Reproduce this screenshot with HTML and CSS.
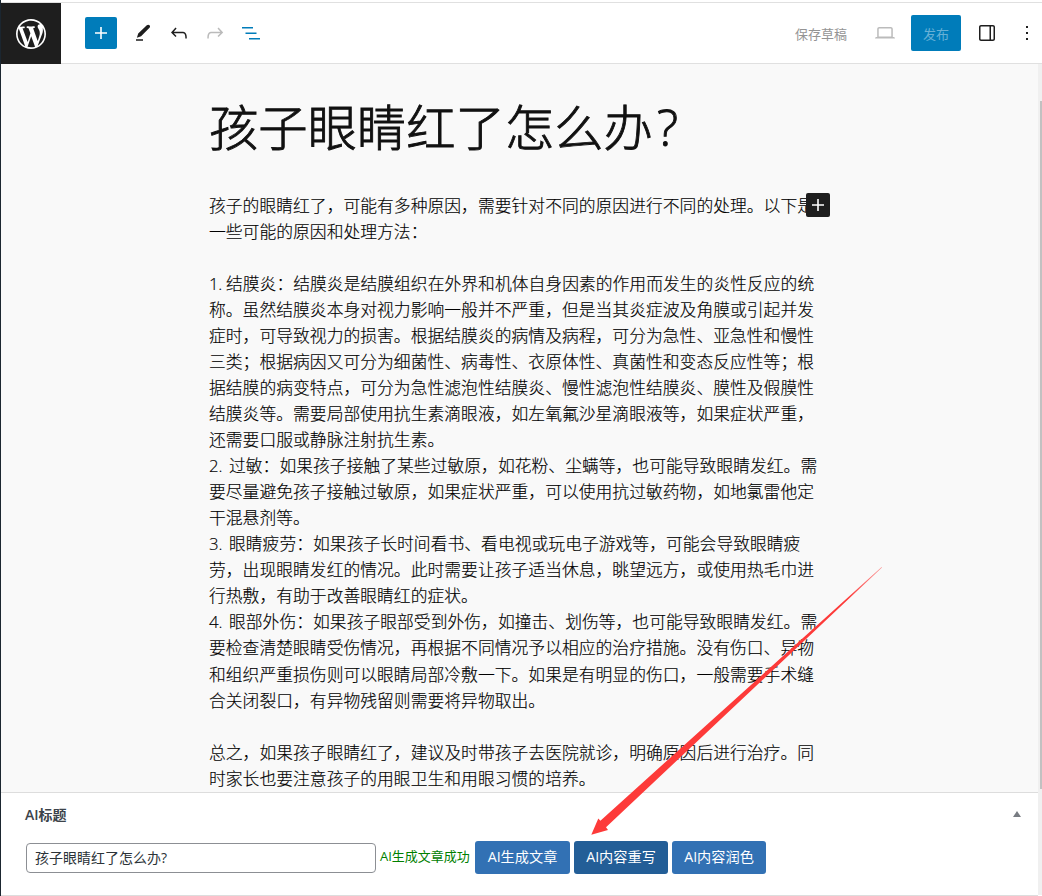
FILE: index.html
```html
<!DOCTYPE html>
<html lang="zh-CN">
<head>
<meta charset="utf-8">
<title>孩子眼睛红了怎么办?</title>
<link rel="stylesheet" href="styles.css">
</head>
<body>
<div class="editor">
  <header class="header">
    <a class="logo"><svg width="30" height="30" viewBox="0 0 20 20"><path d="M20 10c0-5.51-4.49-10-10-10C4.48 0 0 4.49 0 10c0 5.52 4.48 10 10 10 5.51 0 10-4.48 10-10zM7.78 15.37L4.37 6.22c.55-.02 1.17-.08 1.17-.08.5-.06.44-1.13-.06-1.11 0 0-1.45.11-2.37.11-.18 0-.37 0-.58-.01C4.12 2.69 6.87 1.11 10 1.11c2.33 0 4.45.87 6.05 2.34-.68-.11-1.65.39-1.65 1.58 0 .74.45 1.36.9 2.1.35.61.55 1.36.55 2.46 0 1.49-1.4 5-1.4 5l-3.03-8.37c.54-.02.82-.17.82-.17.5-.05.44-1.25-.06-1.22 0 0-1.44.12-2.38.12-.87 0-2.33-.12-2.33-.12-.5-.03-.56 1.2-.06 1.22l.92.08 1.26 3.41zM17.41 10c.24-.64.74-1.87.43-4.25.7 1.29 1.05 2.71 1.05 4.25 0 3.29-1.73 6.24-4.4 7.78.97-2.59 1.94-5.2 2.92-7.78zM6.1 18.09C3.12 16.65 1.11 13.53 1.11 10c0-1.3.23-2.48.72-3.59C3.25 10.3 4.67 14.2 6.1 18.09zm4.03-6.63l2.58 6.98c-.86.29-1.76.45-2.71.45-.79 0-1.57-.11-2.29-.33.81-2.38 1.62-4.74 2.42-7.1z"/></svg></a>
    <div class="tools">
      <button class="add"><svg width="24" height="24" viewBox="0 0 24 24"><path d="M18 11.2h-5.2V6h-1.6v5.2H6v1.6h5.2V18h1.6v-5.2H18z"/></svg></button>
      <svg class="icon" width="24" height="24" viewBox="0 0 24 24"><path d="M15.800 4.300c1-.9 2.100-.7 2.700 0 .7.800.7 1.700 0 2.500L10.100 15.300 5.900 16.800 7.200 12.500zM5 18.300h7v1.500H5z"/></svg>
      <svg class="icon" width="24" height="24" viewBox="0 0 24 24"><path d="M18.300 11.700c-.6-.6-1.400-.9-2.300-.9H6.700l2.900-3.300-1.100-1-4.500 5L8.500 16l1-1-2.700-2.700H16c.5 0 .9.2 1.300.5 1 1 1 3.400 1 4.500v.3h1.500v-.2c0-1.500 0-4.300-1.500-5.700z"/></svg>
      <svg class="icon icon-off" width="24" height="24" viewBox="0 0 24 24"><path d="M15.600 6.500l-1.100 1 2.900 3.300H8c-.9 0-1.700.3-2.300.9-1.400 1.500-1.400 4.200-1.400 5.600v.2h1.500v-.3c0-1.100 0-3.500 1-4.500.3-.3.7-.5 1.300-.5h9.200L14.500 15l1.100 1.100 4.600-4.600-4.600-5z"/></svg>
      <svg class="icon icon-blue" width="24" height="24" viewBox="0 0 24 24"><path d="M3 6h11v1.500H3zM6.500 11.500h11V13h-11zM10 17h11v1.500H10z"/></svg>
    </div>
    <div class="actions">
      <span class="draft">保存草稿</span>
      <svg class="laptop" width="24" height="24" viewBox="0 0 24 24"><path d="M20.500 16h-.7V8c0-1.100-.9-2-2-2H6.200c-1.100 0-2 .9-2 2v8h-.7c-.8 0-1.500.7-1.500 1.500h20c0-.8-.7-1.500-1.500-1.500zM5.700 8c0-.3.200-.5.500-.5h11.600c.3 0 .5.200.5.500v7.600H5.700V8z"/></svg>
      <button class="publish">发布</button>
      <svg class="panel" width="24" height="24" viewBox="0 0 24 24"><path d="M18 4H6c-1.100 0-2 .9-2 2v12c0 1.100.9 2 2 2h12c1.100 0 2-.9 2-2V6c0-1.100-.9-2-2-2zM5.500 18V6c0-.3.200-.5.500-.5h8.500v13H6c-.3 0-.5-.2-.5-.5zm13 0c0 .3-.2.500-.5.500h-2v-13h2c.3 0 .5.200.5.500z"/></svg>
      <svg class="more" width="24" height="24" viewBox="0 0 24 24"><path d="M11 5h2v2h-2zM11 11h2v2h-2zM11 17h2v2h-2z"/></svg>
    </div>
  </header>
  <main class="canvas">
    <article class="post">
      <h1 class="title">孩子眼睛红了怎么办<span class="mark">?</span></h1>
      <div class="first">
        <p>孩子的眼睛红了，可能有多种原因，需要针对不同的原因进行不同的处理。以下是<br>一些可能的原因和处理方法：</p>
        <button class="inserter"><svg width="24" height="24" viewBox="0 0 24 24"><path d="M18 11.200h-5.200V6h-1.600v5.200H6v1.600h5.200V18h1.600v-5.200H18z"/></svg></button>
      </div>
      <p><span class="num num-first">1. </span>结膜炎：结膜炎是结膜组织在外界和机体自身因素的作用而发生的炎性反应的统<br>称。虽然结膜炎本身对视力影响一般并不严重，但是当其炎症波及角膜或引起并发<br>症时，可导致视力的损害。根据结膜炎的病情及病程，可分为急性、亚急性和慢性<br>三类；根据病因又可分为细菌性、病毒性、衣原体性、真菌性和变态反应性等；根<br>据结膜的病变特点，可分为急性滤泡性结膜炎、慢性滤泡性结膜炎、膜性及假膜性<br>结膜炎等。需要局部使用抗生素滴眼液，如左氧氟沙星滴眼液等，如果症状严重，<br>还需要口服或静脉注射抗生素。<br><span class="num">2. </span>过敏：如果孩子接触了某些过敏原，如花粉、尘螨等，也可能导致眼睛发红。需<br>要尽量避免孩子接触过敏原，如果症状严重，可以使用抗过敏药物，如地氯雷他定<br>干混悬剂等。<br><span class="num">3. </span>眼睛疲劳：如果孩子长时间看书、看电视或玩电子游戏等，可能会导致眼睛疲<br>劳，出现眼睛发红的情况。此时需要让孩子适当休息，眺望远方，或使用热毛巾进<br>行热敷，有助于改善眼睛红的症状。<br><span class="num">4. </span>眼部外伤：如果孩子眼部受到外伤，如撞击、划伤等，也可能导致眼睛发红。需<br>要检查清楚眼睛受伤情况，再根据不同情况予以相应的治疗措施。没有伤口、异物<br>和组织严重损伤则可以眼睛局部冷敷一下。如果是有明显的伤口，一般需要手术缝<br>合关闭裂口，有异物残留则需要将异物取出。</p>
      <p>总之，如果孩子眼睛红了，建议及时带孩子去医院就诊，明确原因后进行治疗。同<br>时家长也要注意孩子的用眼卫生和用眼习惯的培养。</p>
    </article>
  </main>
  <section class="metabox">
    <div class="metabox-head"><h2>AI标题</h2><svg width="8" height="6" viewBox="0 0 8 6"><path d="M4 0l4 6H0z"/></svg></div>
    <div class="form">
      <input class="field" type="text" value="孩子眼睛红了怎么办?">
      <span class="status">AI生成文章成功</span>
      <button class="btn btn-first">AI生成文章</button>
      <button class="btn btn-active">AI内容重写</button>
      <button class="btn">AI内容润色</button>
    </div>
  </section>
</div>
<div class="scroll"><div class="thumb"></div></div>
<svg class="arrow" width="293" height="270" viewBox="0 0 293 270">
  <defs><linearGradient id="fade" x1="1" y1="0" x2="0" y2="1"><stop offset="0" stop-color="#fd3a39" stop-opacity=".5"/><stop offset=".12" stop-color="#fd3a39"/></linearGradient></defs>
  <path fill="url(#fade)" d="M292 .4L16 260.300 18 263 1.300 267.800 8.300 251.500 10.400 253.700 291.600.100z"/>
</svg>
</body>
</html>
```
FILE: styles.css
```css
* { box-sizing: border-box; }
body {
  margin: 0;
  height: 896px;
  overflow: hidden;
  position: relative;
  background: #fff;
  color: #1e1e1e;
  font-family: "Open Sans", "Noto Sans CJK SC", sans-serif;
  font-size: 13px;
}
button { font: inherit; border: 0; padding: 0; }
svg { display: block; flex: none; fill: currentColor; }
.editor {
  height: 896px;
  padding-top: 2px;
  border-left: 1px solid #1b2630;
  display: flex;
  flex-direction: column;
}
.header {
  height: 62px;
  flex: none;
  display: flex;
  border-top: 1px solid #e0e0e0;
  border-bottom: 1px solid #e0e0e0;
}
.logo {
  width: 60px;
  height: 61px;
  display: flex;
  align-items: center;
  justify-content: center;
  background: #1e1e1e;
  color: #fff;
}
.tools { display: flex; align-items: center; gap: 12px; padding-left: 24px; }
.add {
  width: 32px;
  height: 32px;
  display: grid;
  place-items: center;
  background: #007cba;
  color: #fff;
  border-radius: 2px;
  margin-right: 2px;
}
.icon-off { color: #bbb; }
.icon-blue { color: #007cba; }
.actions { margin-left: auto; padding-right: 3px; display: flex; align-items: center; }
.draft { color: #949494; margin-right: 26px; }
.laptop { color: #bbb; margin-right: 14px; }
.publish {
  width: 50px;
  height: 36px;
  border-radius: 2px;
  background: #007cba;
  color: #66b0d6;
  margin-right: 14px;
}
.panel { margin-right: 16px; }
.more { flex: none; }
.canvas {
  height: 728px;
  flex: none;
  overflow: hidden;
  background: #f9f9f9;
  margin-right: 4px;
}
.post {
  width: 620px;
  margin-left: 208px;
  padding-top: 28px;
  color: #000;
  font-size: 16.8px;
  line-height: 26.04px;
  letter-spacing: .025px;
  white-space: nowrap;
}
.title {
  margin: 0 0 30.7px;
  height: 70px;
  line-height: 70px;
  font-size: 49.3px;
  font-weight: 300;
  color: #111;
  -webkit-text-stroke: .9px #111;
}
.mark { font-size: 50px; margin-left: 4px; }
.post p { margin: 0 0 26.04px; font-weight: 300; -webkit-text-stroke: .15px #000; }
.num { display: inline-block; width: 20px; white-space: pre; }
.num-first { width: 17px; letter-spacing: -.4px; }
.first { position: relative; }
.inserter {
  position: absolute;
  left: 597px;
  top: .3px;
  width: 24px;
  height: 24px;
  border-radius: 2px;
  background: #1e1e1e;
  color: #fff;
}
.metabox {
  height: 104px;
  margin-right: 4px;
  border-top: 1px solid #ddd;
  border-bottom: 1px solid #ddd;
}
.metabox-head {
  height: 44px;
  padding: 0 17.5px 2px 24px;
  display: flex;
  align-items: center;
  justify-content: space-between;
  color: #787c82;
}
.metabox h2 { margin: 0; font-size: 14px; font-weight: 600; color: #3c434a; }
.form { display: flex; align-items: center; gap: 4px; padding: 4px 0 0 25px; }
.field {
  width: 350px;
  height: 30px;
  border: 1px solid #8c8f94;
  border-radius: 4px;
  padding: 0 8px 2px;
  font: 14px "Open Sans", "Noto Sans CJK SC", sans-serif;
  color: #2c3338;
}
.status { width: 91px; color: #008000; white-space: nowrap; line-height: 30px; padding-bottom: 3px; }
.btn {
  width: 94px;
  height: 33px;
  padding-bottom: 3px;
  border-radius: 3px;
  background: #3271b4;
  color: #fff;
  font-size: 14.2px;
  white-space: nowrap;
}
.btn-first { width: 95px; }
.btn-active { background: #235e97; }
.scroll {
  position: absolute;
  top: 64px;
  right: 0;
  width: 4px;
  height: 831px;
  padding: 37px 0 0 2px;
  background: #f0f0f0;
}
.thumb { height: 688px; background: #c1c1c1; }
.arrow { position: absolute; left: 590px; top: 567px; }
```
